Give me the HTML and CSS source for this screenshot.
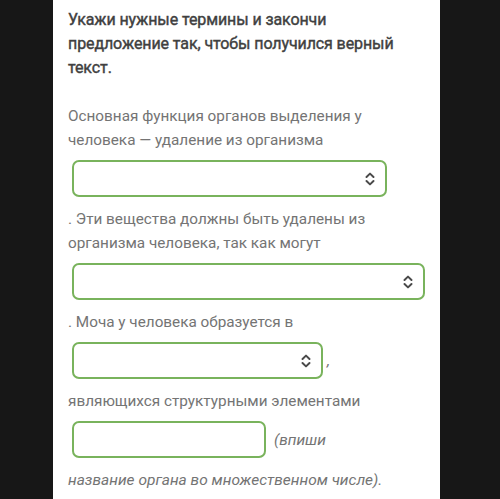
FILE: index.html
```html
<!DOCTYPE html>
<html lang="ru">
<head>
<meta charset="utf-8">
<link rel="stylesheet" href="styles.css">
</head>
<body>
<main class="panel">
  <h1 class="title">Укажи нужные термины и закончи предложение так, чтобы получился верный текст.</h1>
  <p class="text">Основная функция органов выделения у человека — удаление из организма</p>
  <div class="field">
    <div class="select w1"><svg class="chev" viewBox="0 0 10 14" width="10" height="14"><path d="M1.5 5 L5 1.6 L8.5 5 M1.5 9 L5 12.4 L8.5 9" fill="none" stroke="#4a4a4a" stroke-width="2" stroke-linecap="round" stroke-linejoin="round"/></svg></div>
  </div>
  <p class="text">. Эти вещества должны быть удалены из организма человека, так как могут</p>
  <div class="field">
    <div class="select w2"><svg class="chev" viewBox="0 0 10 14" width="10" height="14"><path d="M1.5 5 L5 1.6 L8.5 5 M1.5 9 L5 12.4 L8.5 9" fill="none" stroke="#4a4a4a" stroke-width="2" stroke-linecap="round" stroke-linejoin="round"/></svg></div>
  </div>
  <p class="text">. Моча у человека образуется в</p>
  <div class="field">
    <div class="select w3"><svg class="chev" viewBox="0 0 10 14" width="10" height="14"><path d="M1.5 5 L5 1.6 L8.5 5 M1.5 9 L5 12.4 L8.5 9" fill="none" stroke="#4a4a4a" stroke-width="2" stroke-linecap="round" stroke-linejoin="round"/></svg></div>
    <span class="comma">,</span>
  </div>
  <p class="text">являющихся структурными элементами</p>
  <div class="field">
    <div class="select w4"></div>
    <span class="hint">(впиши</span>
  </div>
  <p class="text hint">название органа во множественном числе).</p>
</main>
</body>
</html>
```

FILE: styles.css
```css
html, body {
  margin: 0;
  padding: 0;
  background: #171717;
}
body {
  font-family: Roboto, "Noto Sans", sans-serif;
}
.panel {
  width: 387px;
  margin-left: 53px;
  min-height: 499px;
  box-sizing: border-box;
  background: #ffffff;
  padding: 8px 15px 0 15px;
}
.title {
  max-width: 335px;
  margin: 0 0 24px 0;
  font-size: 16px;
  line-height: 24px;
  font-weight: 400;
  letter-spacing: -0.1px;
  color: #404040;
  -webkit-text-stroke: 0.4px #404040;
}
.text {
  margin: 0;
  font-size: 15.3px;
  line-height: 24px;
  color: #747474;
}
.hint {
  font-style: italic;
  color: #747474;
  font-size: 15.5px;
  line-height: 24px;
}
.field {
  display: flex;
  align-items: center;
  margin: 8px 0 10px 4px;
}
.select {
  box-sizing: border-box;
  height: 37px;
  border: 2px solid #79b35c;
  border-radius: 7px;
  background: #fff;
  display: flex;
  align-items: center;
  justify-content: flex-end;
  padding-right: 10px;
}
.w1 { width: 315px; }
.w2 { width: 355px; }
.w3 { width: 251px; }
.w4 { width: 194px; }
.chev { display: block; }
.comma {
  margin-left: 4px;
  font-size: 15.5px;
  line-height: 24px;
  color: #747474;
  font-style: italic;
}
.field .hint {
  margin-left: 8px;
}
```
